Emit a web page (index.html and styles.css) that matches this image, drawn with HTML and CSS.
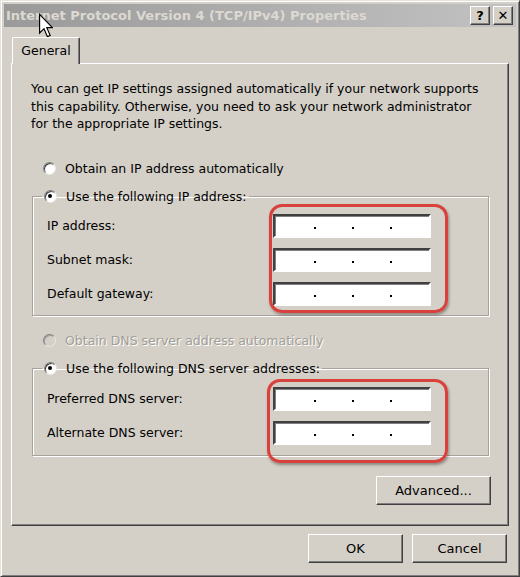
FILE: index.html
```html
<!DOCTYPE html>
<html lang="en">
<head>
  <meta charset="UTF-8">
  <title>Internet Protocol Version 4 (TCP/IPv4) Properties</title>
  <link rel="stylesheet" href="styles.css">
</head>
<body>
  <div class="window">
    <!-- title bar -->
    <div class="titlebar">
      <span class="title">Internet Protocol Version 4 (TCP/IPv4) Properties</span>
      <div class="caption-btns">
        <button class="cap-btn">?</button>
        <button class="cap-btn">&#x2715;</button>
      </div>
    </div>

    <div class="body">
      <div class="tabs">
        <div class="tab">General</div>
      </div>

      <div class="panel">
        <p class="intro">You can get IP settings assigned automatically if your network supports<br>
          this capability. Otherwise, you need to ask your network administrator<br>
          for the appropriate IP settings.</p>

        <div class="radio-row first">
          <span class="radio"></span>
          <span>Obtain an IP address automatically</span>
        </div>

        <fieldset class="group">
          <legend class="radio-row">
            <span class="radio checked"></span>
            <span>Use the following IP address:</span>
          </legend>
          <div class="field-row">
            <span class="field-label">IP address:</span>
            <div class="ipbox"><span class="octet"></span><span class="dot"></span><span class="octet"></span><span class="dot"></span><span class="octet"></span><span class="dot"></span><span class="octet"></span></div>
          </div>
          <div class="field-row">
            <span class="field-label">Subnet mask:</span>
            <div class="ipbox"><span class="octet"></span><span class="dot"></span><span class="octet"></span><span class="dot"></span><span class="octet"></span><span class="dot"></span><span class="octet"></span></div>
          </div>
          <div class="field-row">
            <span class="field-label">Default gateway:</span>
            <div class="ipbox"><span class="octet"></span><span class="dot"></span><span class="octet"></span><span class="dot"></span><span class="octet"></span><span class="dot"></span><span class="octet"></span></div>
          </div>
        </fieldset>

        <div class="radio-row disabled">
          <span class="radio"></span>
          <span>Obtain DNS server address automatically</span>
        </div>

        <fieldset class="group dns">
          <legend class="radio-row">
            <span class="radio checked"></span>
            <span>Use the following DNS server addresses:</span>
          </legend>
          <div class="field-row">
            <span class="field-label">Preferred DNS server:</span>
            <div class="ipbox"><span class="octet"></span><span class="dot"></span><span class="octet"></span><span class="dot"></span><span class="octet"></span><span class="dot"></span><span class="octet"></span></div>
          </div>
          <div class="field-row">
            <span class="field-label">Alternate DNS server:</span>
            <div class="ipbox"><span class="octet"></span><span class="dot"></span><span class="octet"></span><span class="dot"></span><span class="octet"></span><span class="dot"></span><span class="octet"></span></div>
          </div>
        </fieldset>

        <div class="advanced-row">
          <button class="btn advanced">Advanced...</button>
        </div>
      </div>

      <div class="footer">
        <button class="btn">OK</button>
        <button class="btn">Cancel</button>
      </div>
    </div>

    <!-- red highlight marks drawn over the dialog -->
    <div class="mark mark-ip"></div>
    <div class="mark mark-dns"></div>

    <!-- mouse pointer -->
    <svg class="cursor" width="14" height="26" viewBox="0 0 12 21">
      <path d="M0.5 0.5 L0.5 16.5 L4.3 12.8 L7.2 19.6 L9.6 18.6 L6.7 11.9 L11.5 11.9 Z" fill="#fff" stroke="#000" stroke-width="1"/>
    </svg>
  </div>
</body>
</html>
```

FILE: styles.css
```css
* {
  box-sizing: border-box;
}

body {
  margin: 0;
  background: #d4d0c8;
  font-family: "DejaVu Sans", Verdana, sans-serif;
  font-size: 12.5px;
  color: #000;
}

.window {
  position: relative;
  width: 520px;
  height: 577px;
  padding: 3px;
  background: #d4d0c8;
  border: 1px solid;
  border-color: #e6e3dc #404040 #404040 #e6e3dc;
  box-shadow: inset 1px 1px #fff, inset -1px -1px #808080;
}

/* title bar */
.titlebar {
  height: 23px;
  display: flex;
  align-items: center;
  justify-content: space-between;
  padding: 0 3px 0 2px;
  background: linear-gradient(to right, #9a9a9a, #c2c2c2);
}

.title {
  color: #dcd9d2;
  font-weight: bold;
  font-size: 13px;
}

.caption-btns {
  display: flex;
  gap: 3px;
}

.cap-btn {
  width: 20px;
  height: 19px;
  padding: 0;
  background: #d4d0c8;
  border: 1px solid;
  border-color: #fff #404040 #404040 #fff;
  box-shadow: inset -1px -1px #808080;
  font-family: "DejaVu Sans", sans-serif;
  font-weight: bold;
  font-size: 13px;
  line-height: 16px;
  color: #000;
}

/* dialog body */
.body {
  padding: 10px 7px 0 7px;
}

.tabs {
  display: flex;
  padding-left: 1px;
  position: relative;
  z-index: 1;
  margin-bottom: -1px;
}

.tab {
  width: 68px;
  height: 27px;
  padding-top: 5px;
  text-align: center;
  background: #d4d0c8;
  border-top: 1px solid #fff;
  border-left: 1px solid #fff;
  border-right: 1px solid #404040;
  box-shadow: inset -1px 0 #808080;
  border-radius: 2px 2px 0 0;
}

.panel {
  height: 463px;
  padding: 16px 19px 0 19px;
  border: 1px solid;
  border-color: #fff #404040 #404040 #fff;
  box-shadow: inset -1px -1px #808080;
}

.intro {
  margin: 0;
  line-height: 17.5px;
}

.radio-row {
  display: flex;
  align-items: center;
  gap: 9px;
  height: 20px;
  padding-left: 12px;
}

.radio-row.first {
  margin-top: 26px;
}

.radio {
  width: 13px;
  height: 13px;
  border-radius: 50%;
  background: #fff;
  border: 1px solid;
  border-color: #808080 #e8e6e0 #e8e6e0 #808080;
  box-shadow: inset 1px 1px #404040;
  position: relative;
  flex-shrink: 0;
}

.radio.checked::after {
  content: "";
  position: absolute;
  left: 3px;
  top: 3px;
  width: 4px;
  height: 4px;
  border-radius: 50%;
  background: #000;
}

.radio-row.disabled {
  margin-top: 15px;
  color: #a19e96;
  text-shadow: 1px 1px #fff;
}

.radio-row.disabled .radio {
  background: #d4d0c8;
  box-shadow: inset 1px 1px #a0a0a0;
}

/* group boxes */
.group {
  margin: 8px 0 0 1px;
  padding: 7px 0 9px 14px;
  border: 1px solid #a7a39b;
  box-shadow: inset 1px 1px #fff, 1px 1px #fff;
}

.group legend.radio-row {
  padding: 0 2px;
  margin-left: -5px;
}

.group.dns {
  padding-top: 8px;
  padding-bottom: 10px;
}

.field-row {
  display: flex;
  align-items: center;
  height: 24px;
}

.field-row + .field-row {
  margin-top: 10px;
}

.field-label {
  width: 226px;
}

.ipbox {
  display: flex;
  width: 158px;
  height: 24px;
  padding-left: 2px;
  background: #fff;
  border: 2px solid;
  border-color: #404040 #fff #fff #404040;
  box-shadow: inset 1px 1px #808080, 1px 1px #d4d0c8;
}

.octet {
  width: 37px;
}

.dot {
  width: 2px;
  position: relative;
}

.dot::after {
  content: "";
  position: absolute;
  left: 0;
  top: 11px;
  width: 2px;
  height: 2px;
  background: #000;
}

/* buttons */
.btn {
  height: 29px;
  padding: 0;
  background: #d4d0c8;
  border: 1px solid;
  border-color: #fff #404040 #404040 #fff;
  box-shadow: inset -1px -1px #808080;
  font-family: "DejaVu Sans", Verdana, sans-serif;
  font-size: 13px;
  color: #000;
}

.advanced-row {
  display: flex;
  justify-content: flex-end;
  margin: 20px -2px 0 0;
}

.advanced {
  width: 115px;
}

.footer {
  display: flex;
  justify-content: flex-end;
  gap: 9px;
  margin-top: 8px;
  padding-right: 2px;
}

.footer .btn {
  width: 95px;
}

/* red highlight marks */
.mark {
  position: absolute;
  border: 3px solid #d9423c;
  border-radius: 13px;
  box-shadow: 1px 2px 3px rgba(0, 0, 0, 0.35);
}

.mark-ip {
  left: 268px;
  top: 203px;
  width: 179px;
  height: 109px;
}

.mark-dns {
  left: 266px;
  top: 378px;
  width: 181px;
  height: 84px;
}

.cursor {
  position: absolute;
  left: 38px;
  top: 12px;
}
```
